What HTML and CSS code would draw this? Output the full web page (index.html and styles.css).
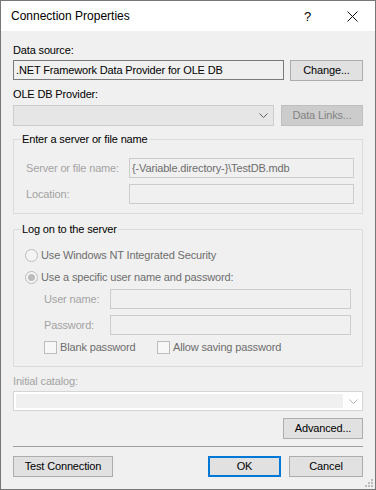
FILE: index.html
```html
<!DOCTYPE html>
<html lang="en">
<head>
    <meta charset="UTF-8">
    <meta name="viewport" content="width=device-width, initial-scale=1.0">
    <title>Connection Properties</title>
    <link rel="stylesheet" href="styles.css">
</head>
<body>
    <div class="window">
        <div class="titlebar">
            <span class="title">Connection Properties</span>
            <span class="caption-btn help">?</span>
            <span class="caption-btn close">
                <svg width="11" height="11" viewBox="0 0 11 11">
                    <path d="M0.5 0.5 L10.5 10.5 M10.5 0.5 L0.5 10.5" stroke="#111" stroke-width="1" fill="none"/>
                </svg>
            </span>
        </div>

        <div class="content">
            <div class="label">Data source:</div>
            <div class="row row-source">
                <div class="textbox readonly source-box">.NET Framework Data Provider for OLE DB</div>
                <div class="button change-btn">Change...</div>
            </div>

            <div class="label label-provider">OLE DB Provider:</div>
            <div class="row row-provider">
                <div class="combo combo-disabled">
                    <svg class="chevron" width="9" height="5" viewBox="0 0 9 5">
                        <polyline points="0.5,0.5 4.5,4.5 8.5,0.5" stroke="#606060" fill="none"/>
                    </svg>
                </div>
                <div class="button disabled links-btn">Data Links...</div>
            </div>

            <!-- Server group -->
            <fieldset class="group group-server">
                <legend>Enter a server or file name</legend>
                <div class="group-body">
                    <div class="field-row">
                        <span class="field-label dim">Server or file name:</span>
                        <div class="textbox disabled server-box">{-Variable.directory-}\TestDB.mdb</div>
                    </div>
                    <div class="field-row second">
                        <span class="field-label dim">Location:</span>
                        <div class="textbox disabled server-box"></div>
                    </div>
                </div>
            </fieldset>

            <!-- Log on group -->
            <fieldset class="group group-logon">
                <legend>Log on to the server</legend>
                <div class="group-body">
                    <div class="option first">
                        <span class="radio"></span>
                        <span class="option-text">Use Windows NT Integrated Security</span>
                    </div>
                    <div class="option second">
                        <span class="radio checked"></span>
                        <span class="option-text">Use a specific user name and password:</span>
                    </div>
                    <div class="cred-row user-row">
                        <span class="cred-label dim">User name:</span>
                        <div class="textbox disabled cred-box"></div>
                    </div>
                    <div class="cred-row pass-row">
                        <span class="cred-label dim">Password:</span>
                        <div class="textbox disabled cred-box"></div>
                    </div>
                    <div class="check-row">
                        <div class="check-item blank-item">
                            <span class="checkbox"></span>
                            <span class="option-text">Blank password</span>
                        </div>
                        <div class="check-item">
                            <span class="checkbox"></span>
                            <span class="option-text">Allow saving password</span>
                        </div>
                    </div>
                </div>
            </fieldset>

            <div class="label dim label-catalog">Initial catalog:</div>
            <div class="combo combo-catalog">
                <div class="combo-field"></div>
                <svg class="chevron" width="9" height="5" viewBox="0 0 9 5">
                    <polyline points="0.5,0.5 4.5,4.5 8.5,0.5" stroke="#b5b5b5" fill="none"/>
                </svg>
            </div>

            <div class="button advanced-btn">Advanced...</div>

            <div class="separator"></div>

            <div class="footer">
                <div class="button test-btn">Test Connection</div>
                <div class="button ok-btn">OK</div>
                <div class="button cancel-btn">Cancel</div>
            </div>
        </div>

        <svg class="grip" width="8" height="8" viewBox="0 0 8 8">
            <rect x="6" y="0" width="2" height="2" fill="#bcbcbc"/>
            <rect x="3" y="3" width="2" height="2" fill="#bcbcbc"/>
            <rect x="6" y="3" width="2" height="2" fill="#bcbcbc"/>
            <rect x="0" y="6" width="2" height="2" fill="#bcbcbc"/>
            <rect x="3" y="6" width="2" height="2" fill="#bcbcbc"/>
            <rect x="6" y="6" width="2" height="2" fill="#bcbcbc"/>
        </svg>
    </div>
</body>
</html>
```

FILE: styles.css
```css
/* Dialog window */
body {
    margin: 0;
    font-family: "Liberation Sans", Arial, sans-serif;
    font-size: 11px;
    letter-spacing: -0.15px;
    color: #000;
}

.window {
    width: 376px;
    height: 490px;
    box-sizing: border-box;
    border: 1px solid #777;
    background-color: #f0f0f0;
    display: flex;
    flex-direction: column;
    position: relative;
}

.titlebar {
    height: 30px;
    background-color: #fff;
    display: flex;
    align-items: center;
    padding-left: 10px;
    font-size: 12px;
    letter-spacing: 0;
}

.title {
    flex: 1;
}

.caption-btn {
    width: 46px;
    height: 30px;
    display: flex;
    align-items: center;
    justify-content: center;
}

.help {
    font-size: 13px;
    padding-left: 3px;
    box-sizing: border-box;
}

.content {
    flex: 1;
    padding: 12px 12px 0;
    display: flex;
    flex-direction: column;
}

.label {
    height: 14px;
    line-height: 14px;
}

.dim {
    color: #a3a3a3;
}

.row {
    display: flex;
    margin-top: 3px;
}

/* Inputs */
.textbox {
    height: 20px;
    box-sizing: border-box;
    border: 1px solid #7a7a7a;
    line-height: 18px;
    padding: 0 2px;
    white-space: nowrap;
    overflow: hidden;
}

.textbox.disabled {
    border-color: #cccccc;
    color: #6d6d6d;
}

.source-box {
    width: 271px;
}

.button {
    height: 21px;
    box-sizing: border-box;
    border: 1px solid #adadad;
    background-color: #e1e1e1;
    line-height: 19px;
    text-align: center;
    white-space: nowrap;
}

.button.disabled {
    background-color: #cccccc;
    border-color: #bfbfbf;
    color: #838383;
}

.change-btn {
    width: 73px;
    margin-left: 6px;
}

.label-provider {
    margin-top: 6px;
}

.row-provider {
    margin-top: 4px;
}

.combo {
    box-sizing: border-box;
    display: flex;
    align-items: center;
    justify-content: flex-end;
}

.combo-disabled {
    width: 261px;
    height: 21px;
    border: 1px solid #cccccc;
    background-color: #e6e6e6;
    padding-right: 5px;
}

.links-btn {
    width: 82px;
    margin-left: 7px;
}

/* Group boxes */
.group {
    margin: 0;
    padding: 0;
    min-inline-size: 0;
    border: 1px solid #dcdcdc;
}

.group legend {
    margin-left: 7px;
    padding: 0 1px;
    line-height: 14px;
}

.group-server {
    margin-top: 6px;
}

.group-server .group-body {
    padding: 0 8px 9px 12px;
}

.field-row {
    display: flex;
    align-items: center;
    margin-top: 12px;
}

.field-row.second {
    margin-top: 6px;
}

.field-label {
    width: 103px;
}

.server-box {
    width: 225px;
}

.group-logon {
    margin-top: 8px;
}

.group-logon .group-body {
    padding: 0 11px 12px 11px;
}

.option {
    display: flex;
    align-items: center;
    height: 14px;
    color: #6d6d6d;
}

.option.first {
    margin-top: 12px;
}

.option.second {
    margin-top: 8px;
}

.radio {
    width: 13px;
    height: 13px;
    box-sizing: border-box;
    border: 1px solid #bcbcbc;
    border-radius: 50%;
    background-color: #f4f4f4;
    margin-right: 3px;
    display: flex;
    align-items: center;
    justify-content: center;
}

.radio.checked::after {
    content: "";
    width: 7px;
    height: 7px;
    border-radius: 50%;
    background-color: #bcbcbc;
}

.cred-row {
    display: flex;
    align-items: center;
    margin-left: 19px;
}

.user-row {
    margin-top: 5px;
}

.pass-row {
    margin-top: 6px;
}

.cred-label {
    width: 66px;
}

.cred-box {
    flex: 1;
}

.check-row {
    display: flex;
    margin-top: 5px;
    margin-left: 19px;
    color: #6d6d6d;
}

.check-item {
    display: flex;
    align-items: center;
    height: 14px;
}

.blank-item {
    width: 113px;
}

.checkbox {
    width: 13px;
    height: 13px;
    box-sizing: border-box;
    border: 1px solid #bcbcbc;
    background-color: #f7f7f7;
    margin-right: 3px;
}

/* Catalog and footer */
.label-catalog {
    margin-top: 7px;
}

.combo-catalog {
    margin-top: 3px;
    height: 20px;
    border: 1px solid #d5d5d5;
    background-color: #fff;
    padding: 2px 4px 2px 2px;
}

.combo-field {
    flex: 1;
    height: 100%;
    background-color: #f0f0f0;
    margin-right: 6px;
}

.advanced-btn {
    width: 80px;
    align-self: flex-end;
    margin-top: 7px;
}

.separator {
    height: 1px;
    background-color: #a0a0a0;
    margin-top: 7px;
}

.footer {
    display: flex;
    margin-top: 9px;
}

.test-btn {
    width: 100px;
}

.ok-btn {
    width: 73px;
    margin-left: auto;
    border: 2px solid #0078d7;
    line-height: 17px;
}

.cancel-btn {
    width: 74px;
    margin-left: 8px;
}

.grip {
    position: absolute;
    right: 2px;
    bottom: 2px;
}
```
